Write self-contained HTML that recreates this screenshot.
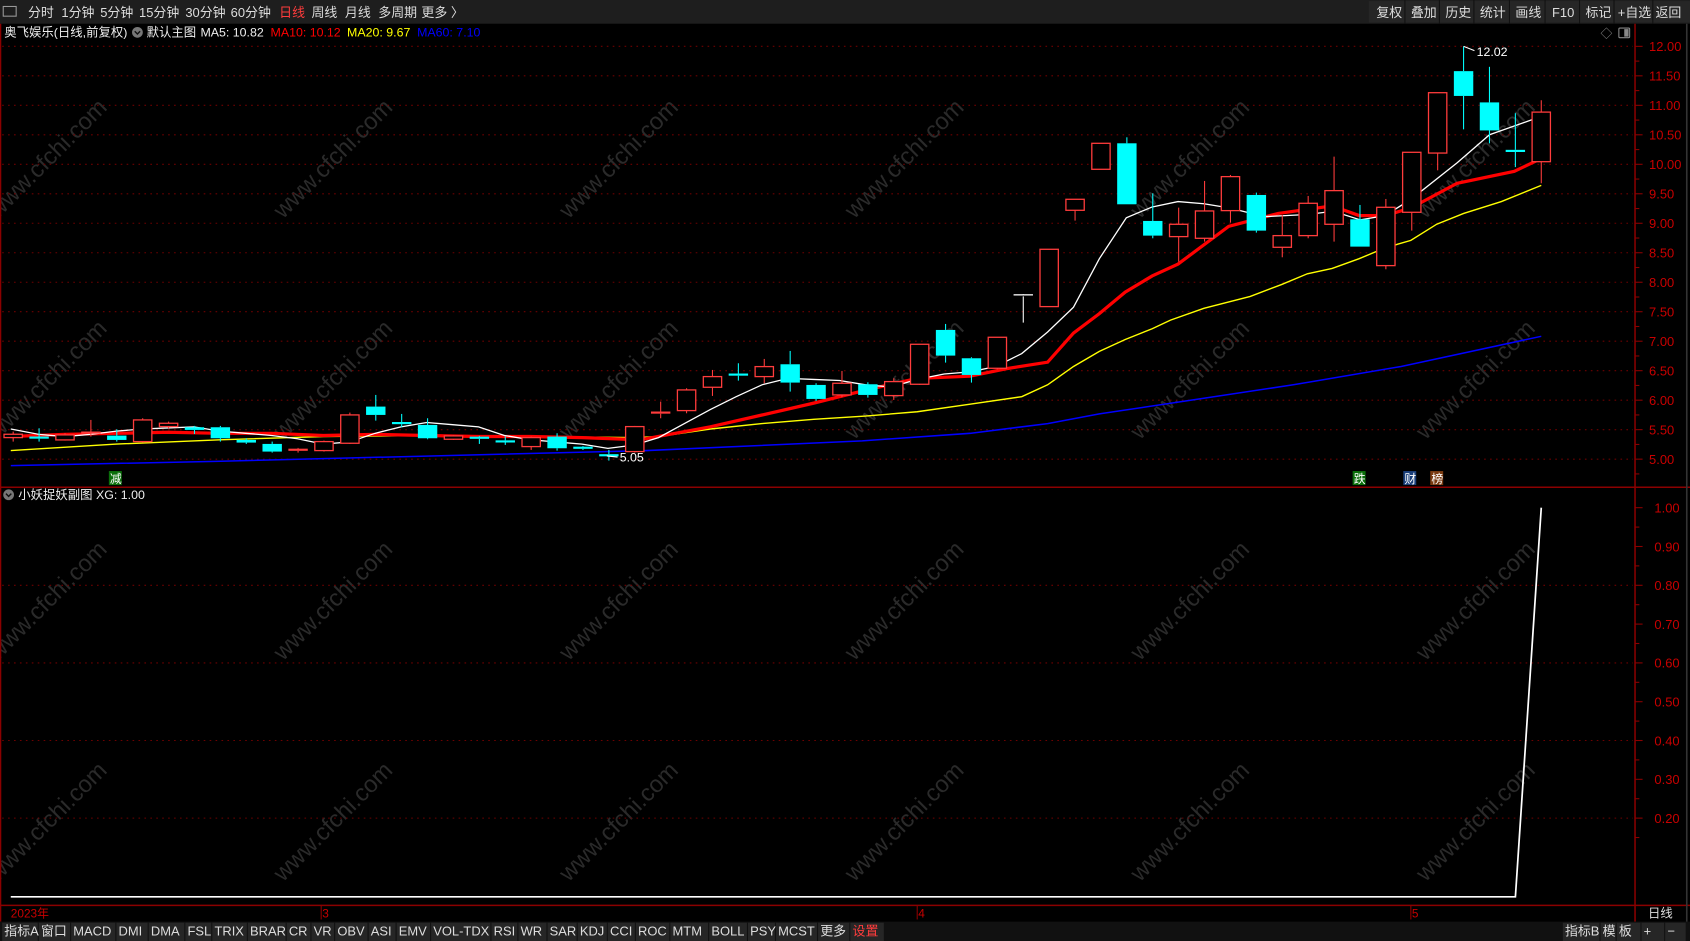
<!DOCTYPE html>
<html><head><meta charset="utf-8">
<style>
html,body{margin:0;padding:0;background:#000;width:1690px;height:941px;overflow:hidden}
svg{display:block}
text{font-family:"Liberation Sans","Noto Sans CJK SC",sans-serif}
</style></head><body>
<svg id="s" width="1690" height="941" viewBox="0 0 1568 873" preserveAspectRatio="none" xmlns="http://www.w3.org/2000/svg">
<rect width="1568" height="873" fill="#000"/>
<!-- top bar -->
<rect x="0" y="0" width="1568" height="22" fill="#1e1e1e"/>
<rect x="1270" y="1" width="298" height="20" fill="#262626"/>
<g stroke="#111" stroke-width="1"><line x1="1303.5" y1="0" x2="1303.5" y2="22"/><line x1="1335.5" y1="0" x2="1335.5" y2="22"/><line x1="1367.5" y1="0" x2="1367.5" y2="22"/><line x1="1400.5" y1="0" x2="1400.5" y2="22"/><line x1="1433.5" y1="0" x2="1433.5" y2="22"/><line x1="1465.5" y1="0" x2="1465.5" y2="22"/><line x1="1497.5" y1="0" x2="1497.5" y2="22"/><line x1="1533.5" y1="0" x2="1533.5" y2="22"/></g>
<rect x="3" y="6" width="12" height="9" fill="none" stroke="#999" stroke-width="1"/>
<g font-size="12" fill="#ddd">
<text x="26" y="16">分时</text><text x="57" y="16">1分钟</text><text x="93" y="16">5分钟</text><text x="129" y="16">15分钟</text><text x="172" y="16">30分钟</text><text x="214" y="16">60分钟</text><text x="259" y="16" fill="#ff3c3c">日线</text><text x="289" y="16">周线</text><text x="320" y="16">月线</text><text x="351" y="16">多周期</text><text x="391" y="16">更多 〉</text>
<text x="1277" y="16">复权</text><text x="1309" y="16">叠加</text><text x="1341" y="16">历史</text><text x="1373" y="16">统计</text><text x="1406" y="16">画线</text><text x="1440" y="16">F10</text><text x="1471" y="16">标记</text><text x="1501" y="16">+自选</text><text x="1536" y="16">返回</text>
</g>
<!-- info line -->
<g font-size="11.5">
<text x="4" y="34" fill="#eee">奥飞娱乐(日线,前复权)</text>
<circle cx="127.5" cy="30" r="5" fill="#777"/><path d="M125 29l2.5 2.5 2.5-2.5" stroke="#111" fill="none" stroke-width="1.3"/>
<text x="136" y="34" fill="#eee">默认主图</text>
<text x="186" y="34" fill="#eee">MA5: 10.82</text>
<text x="251" y="34" fill="#f00">MA10: 10.12</text>
<text x="322" y="34" fill="#ff0">MA20: 9.67</text>
<text x="387" y="34" fill="#00f">MA60: 7.10</text>
</g>
<text x="1485" y="35" font-size="11" fill="#888">◇</text>
<rect x="1502" y="26" width="10" height="9" fill="none" stroke="#888" rx="1"/><rect x="1507" y="27" width="4" height="7" fill="#888"/>
<!-- watermarks -->
<g id="wm" font-size="22" fill="#2a2a2a"></g>
<!-- grid -->
<g id="grid" stroke="#6e0000" stroke-width="1" stroke-dasharray="1.5 4"></g>
<!-- axes -->
<g stroke="#8b0000" stroke-width="1.4" fill="none">
<line x1="1517" y1="22" x2="1517" y2="855"/>
<line x1="0" y1="452" x2="1568" y2="452"/>
<line x1="0" y1="840" x2="1568" y2="840"/>
<line x1="0.5" y1="22" x2="0.5" y2="855"/>
</g>
<line x1="1565" y1="22" x2="1565" y2="873" stroke="#333" stroke-width="1.5"/>
<g id="axlab" font-size="12" fill="#c80000"></g>
<g id="ticks" stroke="#8b0000" stroke-width="1"></g>
<!-- lines -->
<polyline fill="none" stroke="#00f" stroke-width="1.4" points="10,432 200,428 400,423 600,418 800,409 900,402 972,393 1020,384 1100,372 1200,357 1300,340 1430,312"/>
<polyline fill="none" stroke="#ff0" stroke-width="1.3" points="10,418 108,412 204,408 300,405 396,404 492,405 588,406 611,405 659,398 707,393 755,389 803,386 851,382 900,375 948,368 972,357 996,340 1020,326 1044,315 1069,305 1086,297 1117,286 1160,275 1189,264 1213,254 1236,249 1261,240 1285,230 1309,223 1333,208 1358,198 1393,187 1430,172"/>
<polyline fill="none" stroke="#f00" stroke-width="3" points="10,405 60,403 108,402 156,401 204,402 252,402 300,404 348,403 396,404 444,405 492,405 540,406 594,408 659,396 707,385 755,374 803,362 851,351 900,349 934,342 972,336 996,309 1020,291 1044,271 1069,256 1093,245 1140,210 1186,198 1236,191 1261,200 1285,200 1309,193 1352,170 1405,159 1430,147"/>
<polyline fill="none" stroke="#fff" stroke-width="1.2" points="10,398 36,403 60,405 84,403 108,400 132,398 156,397 180,396 204,400 228,402 252,404 276,407 300,412 324,410 348,402 372,396 396,392 420,394 444,396 468,404 492,408 516,410 540,412 564,416 588,413 611,406 635,393 659,380 683,368 707,357 731,351 755,352 779,353 803,357 827,359 851,352 876,347 900,345 924,340 948,328 972,308 996,285 1020,240 1045,202 1069,192 1093,187 1117,189 1141,193 1173,201 1213,199 1237,196 1262,204 1285,200 1309,185 1352,151 1382,125 1430,108"/>
<g id="candles"></g>
<!-- labels -->
<line x1="1358" y1="43" x2="1368" y2="47" stroke="#fff"/><text x="1370" y="52" font-size="11.5" fill="#fff">12.02</text>
<line x1="563" y1="423" x2="573" y2="424" stroke="#fff"/><text x="575" y="428" font-size="11.5" fill="#fff">5.05</text>
<rect x="101" y="437" width="12" height="13" fill="#0a6e0a"/><text x="102" y="448" font-size="11" fill="#fff">减</text>
<rect x="1255" y="437" width="12" height="13" fill="#0a6e0a"/><text x="1256" y="448" font-size="11" fill="#fff">跌</text>
<rect x="1302" y="437" width="12" height="13" fill="#1a3f7a"/><text x="1303" y="448" font-size="11" fill="#fff">财</text>
<rect x="1327" y="437" width="12" height="13" fill="#7a3a10"/><text x="1328" y="448" font-size="11" fill="#fff">榜</text>
<!-- sub panel -->
<circle cx="8" cy="459" r="5" fill="#777"/><path d="M5.5 458l2.5 2.5 2.5-2.5" stroke="#111" fill="none" stroke-width="1.3"/>
<text x="17" y="463" font-size="11.5" fill="#eee">小妖捉妖副图 XG: 1.00</text>
<polyline fill="none" stroke="#fff" stroke-width="1.6" points="10,832 1406,832 1430,471"/>
<!-- date axis -->
<g font-size="11" fill="#c80000"><text x="10" y="851">2023年</text><text x="299" y="851">3</text><text x="852" y="851">4</text><text x="1310" y="851">5</text></g>
<g stroke="#8b0000"><line x1="298" y1="840" x2="298" y2="853"/><line x1="851" y1="840" x2="851" y2="853"/><line x1="1309" y1="840" x2="1309" y2="853"/><line x1="1517" y1="840" x2="1517" y2="855"/></g>
<text x="1529" y="851" font-size="11.5" fill="#ddd">日线</text>
<!-- bottom toolbar -->
<rect x="0" y="855" width="1568" height="18" fill="#111"/>
<g id="bt" font-size="12" fill="#ddd"></g>
</svg>
<script>
var NS="http://www.w3.org/2000/svg";
function el(p,t,a,txt){var e=document.createElementNS(NS,t);for(var k in a)e.setAttribute(k,a[k]);if(txt)e.textContent=txt;document.getElementById(p).appendChild(e);return e;}
// watermarks
[45,310,575,840,1105,1370].forEach(function(x){[145,350,555,760].forEach(function(y){el("wm","text",{x:x-75,y:y+8,transform:"rotate(-45 "+x+" "+y+")"},"www.cfchi.com");});});
// grid & price labels
function py(p){return 43+(12-p)*54.71;}
for(var p=5;p<=12.001;p+=0.5){var y=py(p);el("grid","line",{x1:2,y1:y,x2:1515,y2:y});el("axlab","text",{x:1530,y:y+4.5},p.toFixed(2));el("ticks","line",{x1:1517,y1:y,x2:1524,y2:y});el("ticks","line",{x1:1517,y1:y+13.7,x2:1521,y2:y+13.7});}
for(var v=1;v>=0.2;v-=0.1){var y=471+(1-v)*360;el("axlab","text",{x:1535,y:y+4.5},v.toFixed(2));el("ticks","line",{x1:1517,y1:y,x2:1524,y2:y});el("ticks","line",{x1:1517,y1:y+18,x2:1521,y2:y+18});var r=Math.round(v*10);if(r%2==0&&r<10)el("grid","line",{x1:2,y1:y,x2:1515,y2:y});}
// candles
function cx(i){return 1430-(59-i)*24.03;}
var A=[[193,203,185,215,'r'],[201,205,175,215,'c'],[195,210,190,212,'r'],[186,190,150,200,'r'],[197,210,178,215,'c'],[150,215,145,218,'r'],[160,170,155,175,'r'],[172,180,168,192,'c'],[172,205,168,215,'c'],[210,218,205,222,'c'],[222,245,215,248,'c'],[237,242,234,248,'r'],[215,242,212,245,'r'],[135,220,128,222,'r'],[110,135,75,152,'c'],[158,161,132,172,'c'],[165,205,145,208,'c'],[198,208,196,210,'r'],[202,205,198,222,'c'],[213,216,200,225,'c'],[203,230,200,240,'r'],[200,235,190,242,'c'],[231,236,228,240,'c'],[255,257,240,272,'c'],[170,245,168,248,'r']];
var C=[];A.forEach(function(a){C.push([343.2+a[0]*0.3092,343.2+a[1]*0.3092,343.2+a[2]*0.3092,343.2+a[3]*0.3092,a[4]]);});
var B=[[876,880,845,895,'r'],[810,872,805,880,'r'],[770,802,750,828,'r'],[762,766,730,782,'c'],[740,770,717,790,'r'],[733,788,693,815,'c'],[795,837,790,843,'c'],[790,825,753,832,'r'],[793,825,787,833,'c'],[785,827,775,840,'r'],[673,793,673,795,'r'],[630,707,612,728,'c'],[715,765,712,788,'c'],[652,745,652,748,'r'],[525,527,525,608,'w'],[388,560,388,560,'r'],[238,271,238,302,'r'],[70,148,70,148,'r'],[70,253,52,253,'c'],[303,347,220,355,'c']];
B.forEach(function(a){C.push([111.3+a[0]*0.3092,111.3+a[1]*0.3092,111.3+a[2]*0.3092,111.3+a[3]*0.3092,a[4]]);});
var D=[[313,350,263,425,'r'],[273,355,183,365,'r'],[170,272,165,308,'r'],[225,332,218,338,'c'],[347,382,285,412,'r'],[250,347,228,355,'r'],[212,313,110,365,'r'],[298,380,255,380,'c'],[262,437,237,448,'r']];
D.forEach(function(a){C.push([111.3+a[0]*0.3092,111.3+a[1]*0.3092,111.3+a[2]*0.3092,111.3+a[3]*0.3092,a[4]]);});
C.push([111.3+97*0.3092,111.3+277*0.3092,111.3+97*0.3092,111.3+332*0.3092,'r']);
C.push([86,142,86,158,'r'],[66,89,43,120,'c'],[95,121,62,133,'c'],[139,141,105,155,'c'],[104,150,93,170,'r']);
C.forEach(function(c,i){var x=cx(i);var t=c[0],b=c[1];if(b-t<2){var m=(t+b)/2;t=m-1;b=m+1;}
var col=c[4]=='r'?'#ff3c3c':(c[4]=='c'?'#00ffff':'#fff');
el("candles","line",{x1:x,y1:c[2],x2:x,y2:t,stroke:col,"stroke-width":1});
el("candles","line",{x1:x,y1:b,x2:x,y2:c[3],stroke:col,"stroke-width":1});
if(c[4]=='c')el("candles","rect",{x:x-9,y:t,width:18,height:b-t,fill:col});
else if(c[4]=='w')el("candles","rect",{x:x-9,y:t,width:18,height:1.2,fill:col});
else if(b-t<=2.5)el("candles","rect",{x:x-9,y:t,width:18,height:b-t,fill:col});
else el("candles","rect",{x:x-8.5,y:t,width:17,height:b-t,fill:"#000",stroke:col,"stroke-width":1.2});});
// bottom toolbar
var it=[["指标A",4],["窗口",38],["MACD",68],["DMI",110],["DMA",140],["FSL",174],["TRIX",199],["BRAR",232],["CR",268],["VR",291],["OBV",313],["ASI",344],["EMV",370],["VOL-TDX",402],["RSI",458],["WR",483],["SAR",510],["KDJ",538],["CCI",566],["ROC",592],["MTM",624],["BOLL",660],["PSY",696],["MCST",722],["更多",761],["设置",791],["指标B",1452],["模",1487],["板",1502],["+",1525],["−",1547]];
it.forEach(function(a,i){var nx=(i+1<it.length&&it[i+1][1]>a[1]&&it[i+1][1]-a[1]<70)?it[i+1][1]:a[1]+ (a[0].length*12+8);
el("bt","rect",{x:a[1]-2,y:856,width:nx-a[1]-1,height:17,fill:"#262626"});
el("bt","text",{x:a[1],y:868,fill:a[0]=="设置"?"#ff3c3c":"#ddd"},a[0]);});
</script>
</body></html>
